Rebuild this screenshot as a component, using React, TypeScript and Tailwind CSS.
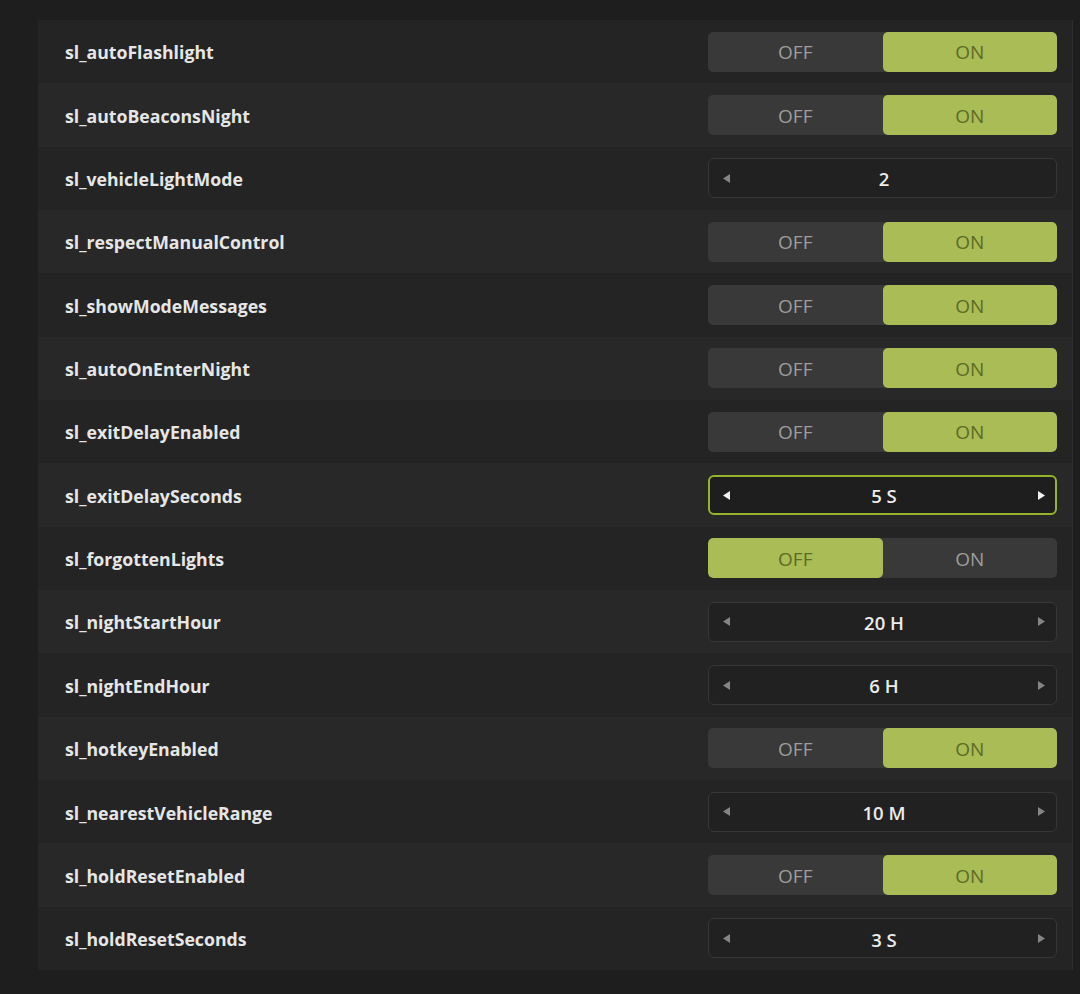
import React from "react";

type Row =
  | { name: string; kind: "toggle"; on: boolean }
  | { name: string; kind: "select"; value: string; left: boolean; right: boolean; focused?: boolean };

const rows: Row[] = [
  { name: "sl_autoFlashlight", kind: "toggle", on: true },
  { name: "sl_autoBeaconsNight", kind: "toggle", on: true },
  { name: "sl_vehicleLightMode", kind: "select", value: "2", left: true, right: false },
  { name: "sl_respectManualControl", kind: "toggle", on: true },
  { name: "sl_showModeMessages", kind: "toggle", on: true },
  { name: "sl_autoOnEnterNight", kind: "toggle", on: true },
  { name: "sl_exitDelayEnabled", kind: "toggle", on: true },
  { name: "sl_exitDelaySeconds", kind: "select", value: "5 S", left: true, right: true, focused: true },
  { name: "sl_forgottenLights", kind: "toggle", on: false },
  { name: "sl_nightStartHour", kind: "select", value: "20 H", left: true, right: true },
  { name: "sl_nightEndHour", kind: "select", value: "6 H", left: true, right: true },
  { name: "sl_hotkeyEnabled", kind: "toggle", on: true },
  { name: "sl_nearestVehicleRange", kind: "select", value: "10 M", left: true, right: true },
  { name: "sl_holdResetEnabled", kind: "toggle", on: true },
  { name: "sl_holdResetSeconds", kind: "select", value: "3 S", left: true, right: true },
];

function Arrow({ dir, bright }: { dir: "l" | "r"; bright: boolean }) {
  return (
    <svg width="9" height="11" viewBox="0 0 9 11" className="shrink-0">
      {dir === "l" ? (
        <path d="M8 1 L1 5.5 L8 10 Z" fill={bright ? "#f2f2f2" : "#858585"} />
      ) : (
        <path d="M1 1 L8 5.5 L1 10 Z" fill={bright ? "#f2f2f2" : "#858585"} />
      )}
    </svg>
  );
}

function Toggle({ on }: { on: boolean }) {
  return (
    <div className="flex h-[40px] w-[349px] overflow-hidden rounded-[5px] bg-[#393939] text-[19px]" style={{ fontFamily: "'Open Sans', sans-serif" }}>
      <div className={`flex flex-1 items-center justify-center rounded-[5px] pt-[2px] ${!on ? "bg-[#a9bc55] text-[#5d6b24]" : "text-[#9d9d9d]"}`}>OFF</div>
      <div className={`flex flex-1 items-center justify-center rounded-[5px] pt-[2px] ${on ? "bg-[#a9bc55] text-[#5d6b24]" : "text-[#9d9d9d]"}`}>ON</div>
    </div>
  );
}

function Select({ value, left, right, focused }: { value: string; left: boolean; right: boolean; focused?: boolean }) {
  return (
    <div
      className={`flex h-[40px] w-[349px] items-center justify-between rounded-[6px] ${
        focused ? "border-[2.5px] border-[#93b42c] bg-[#1e1e1e] pl-[12px] pr-[9px]" : "border border-[#373737] bg-[#212121] pl-[13px] pr-[10px]"
      }`}
    >
      <div className="w-[9px]">{left && <Arrow dir="l" bright={!!focused} />}</div>
      <span className="pt-[2px] text-[18.5px] font-semibold text-[#ececec]" style={{ fontFamily: "'Open Sans', sans-serif" }}>{value}</span>
      <div className="w-[9px]">{right && <Arrow dir="r" bright={!!focused} />}</div>
    </div>
  );
}

export default function App() {
  return (
    <div className="min-h-[994px] w-[1080px] bg-[#1e1e1e] pl-[38px] pt-[20px]">
      <div className="w-[1035px] border-r border-[#2e2e2e]">
        {rows.map((r, i) => (
          <div
            key={r.name}
            className={`flex h-[63.35px] items-center justify-between pl-[27px] pr-[15px] ${i % 2 === 0 ? "bg-[#242424]" : "bg-[#282828]"}`}
          >
            <span className="pt-[2px] text-[17.7px] font-bold text-[#e6e6e6]" style={{ fontFamily: "'Open Sans', sans-serif" }}>
              {r.name}
            </span>
            {r.kind === "toggle" ? (
              <Toggle on={r.on} />
            ) : (
              <Select value={r.value} left={r.left} right={r.right} focused={r.focused} />
            )}
          </div>
        ))}
      </div>
    </div>
  );
}
